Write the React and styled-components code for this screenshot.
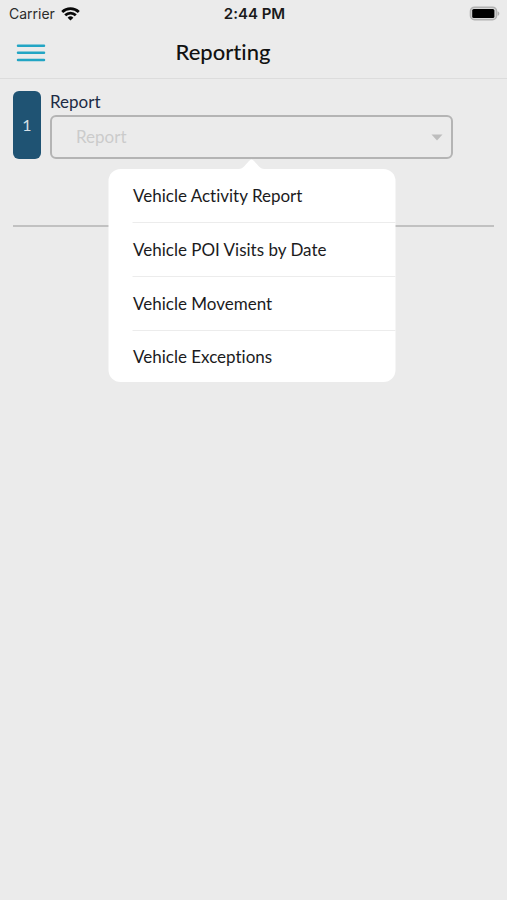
import React from "react";
import styled, { createGlobalStyle } from "styled-components";

const GlobalStyle = createGlobalStyle`
  *, *::before, *::after { box-sizing: border-box; }
  body {
    margin: 0;
    background: #ebebeb;
    color: #1c1c1e;
    font-family: Lato, "Liberation Sans", sans-serif;
    font-variant-ligatures: none;
  }
`;

const Screen = styled.div`
  min-height: 100vh;
  background: #ebebeb;
`;

const StatusBar = styled.div`
  display: grid;
  grid-template-columns: 1fr auto 1fr;
  align-items: center;
  height: 27px;
  padding: 0 7px 0 9px;
  font-family: Inter, "Liberation Sans", sans-serif;
  font-size: 14px;
  line-height: 20px;
`;

const Carrier = styled.div`
  display: flex;
  align-items: center;
  gap: 6px;
  color: #2c2c2c;
`;

const Clock = styled.div`
  font-size: 15px;
  font-weight: 600;
  color: #1a1a1a;
`;

const BatterySlot = styled.div`
  display: flex;
  justify-content: flex-end;
`;

const NavBar = styled.header`
  display: grid;
  grid-template-columns: 30px 1fr 107px;
  align-items: center;
  height: 52px;
  padding: 0 0 0 16px;
  border-bottom: 1px solid #dcdcdc;
`;

const MenuButton = styled.button`
  display: flex;
  padding: 0;
  border: 0;
  background: none;
  cursor: pointer;
`;

const Title = styled.h1`
  margin: 0;
  padding-bottom: 2px;
  text-align: center;
  font-size: 22px;
  line-height: 28px;
  font-weight: 500;
  color: #111;
`;

const Content = styled.main`
  padding: 12px 13px;
`;

const Step = styled.section`
  display: flex;
  gap: 9px;
  padding-right: 41px;
`;

const StepNumber = styled.div`
  display: flex;
  align-items: center;
  justify-content: center;
  width: 28px;
  padding-bottom: 2px;
  border-radius: 6px;
  background: #1f5373;
  color: #d5e0e7;
  font-size: 16px;
`;

const Field = styled.div`
  flex: 1;
  min-width: 0;
`;

const Label = styled.label`
  display: block;
  height: 24px;
  font-size: 17px;
  line-height: 22px;
  color: #1d2b45;
`;

const SelectWrap = styled.div`
  position: relative;
  display: grid;
  align-items: center;
`;

const Select = styled.select`
  grid-area: 1 / 1;
  width: 100%;
  height: 44px;
  padding: 0 40px 2px 24px;
  border: 2px solid #b4b4b4;
  border-radius: 6px;
  appearance: none;
  background: transparent;
  color: #cbcbcb;
  font-family: inherit;
  font-size: 17px;
`;

const Caret = styled.svg`
  grid-area: 1 / 1;
  justify-self: end;
  margin-right: 10px;
  pointer-events: none;
`;

const Popover = styled.div`
  position: absolute;
  top: calc(100% + 10px);
  left: 50%;
  width: 287px;
  transform: translateX(-50%);
  border-radius: 12px;
  background: #fff;
`;

const Arrow = styled.svg`
  position: absolute;
  bottom: 100%;
  left: 50%;
  transform: translateX(-50%);
`;

const OptionList = styled.ul`
  margin: 0;
  padding: 0 0 0 24px;
  list-style: none;
`;

const OptionButton = styled.button`
  display: block;
  width: 100%;
  padding: 15px 16px 14px 1px;
  border: 0;
  background: none;
  color: #1b1b1d;
  font-family: inherit;
  font-variant-ligatures: none;
  font-size: 17px;
  line-height: 24px;
  text-align: left;
  cursor: pointer;
`;

const OptionRow = styled.li`
  border-bottom: 1px solid #ececec;

  &:last-child {
    border-bottom: 0;
  }

  &:last-child ${OptionButton} {
    padding-top: 14px;
    padding-bottom: 13px;
  }
`;

const Divider = styled.hr`
  height: 2px;
  margin: 66px 0 0;
  border: 0;
  background: #c1c1c1;
`;

const reports = [
  "Vehicle Activity Report",
  "Vehicle POI Visits by Date",
  "Vehicle Movement",
  "Vehicle Exceptions",
];

function WifiIcon() {
  return (
    <svg width="19" height="14" viewBox="0 0 19 14" fill="none" stroke="#080808" strokeWidth="2.8" aria-hidden="true">
      <path d="M1.2 4.9A12 12 0 0 1 17.8 4.9" />
      <path d="M4.2 8.2A7.6 7.6 0 0 1 14.8 8.2" />
      <path d="M9.5 13.6 6.6 10.7A4.1 4.1 0 0 1 12.4 10.7Z" fill="#080808" stroke="none" />
    </svg>
  );
}

function BatteryIcon() {
  return (
    <svg width="31" height="16" viewBox="0 0 31 16" aria-hidden="true">
      <rect x="1.5" y="1.2" width="26" height="12.5" rx="4" fill="#d8d8d8" stroke="#b2b2b2" strokeWidth="1.6" />
      <rect x="3.2" y="3" width="22.2" height="9" rx="1.6" fill="#000" />
      <path d="M28.6 5.2c2.3.8 2.3 3.8 0 4.6z" fill="#aeaeae" />
    </svg>
  );
}

function MenuIcon() {
  return (
    <svg width="30" height="20" viewBox="0 0 30 20" stroke="#22a5c4" strokeWidth="2.5" strokeLinecap="round" aria-hidden="true">
      <path d="M2 2.7H28M2 9.8H28M2 17H28" />
    </svg>
  );
}

export default function App() {
  return (
    <>
      <GlobalStyle />
      <Screen>
        <StatusBar>
          <Carrier>
            <span>Carrier</span>
            <WifiIcon />
          </Carrier>
          <Clock>2:44 PM</Clock>
          <BatterySlot>
            <BatteryIcon />
          </BatterySlot>
        </StatusBar>
        <NavBar>
          <MenuButton type="button" aria-label="Open menu">
            <MenuIcon />
          </MenuButton>
          <Title>Reporting</Title>
        </NavBar>
        <Content>
          <Step>
            <StepNumber>1</StepNumber>
            <Field>
              <Label htmlFor="report">Report</Label>
              <SelectWrap>
                <Select id="report" defaultValue="">
                  <option value="">Report</option>
                  {reports.map((name) => (
                    <option key={name} value={name}>{name}</option>
                  ))}
                </Select>
                <Caret width="12" height="7" viewBox="0 0 12 7" aria-hidden="true">
                  <path d="M0.5 0.5H11.5L6 6.5Z" fill="#bdbdbd" />
                </Caret>
                <Popover>
                  <Arrow width="26" height="10" viewBox="0 0 26 10" aria-hidden="true">
                    <path d="M0 10C3 10 4 9 6 7L10.5 2Q13 -1 15.5 2L20 7C22 9 23 10 26 10Z" fill="#fff" />
                  </Arrow>
                  <OptionList>
                    {reports.map((name) => (
                      <OptionRow key={name}>
                        <OptionButton type="button">{name}</OptionButton>
                      </OptionRow>
                    ))}
                  </OptionList>
                </Popover>
              </SelectWrap>
            </Field>
          </Step>
          <Divider />
        </Content>
      </Screen>
    </>
  );
}
